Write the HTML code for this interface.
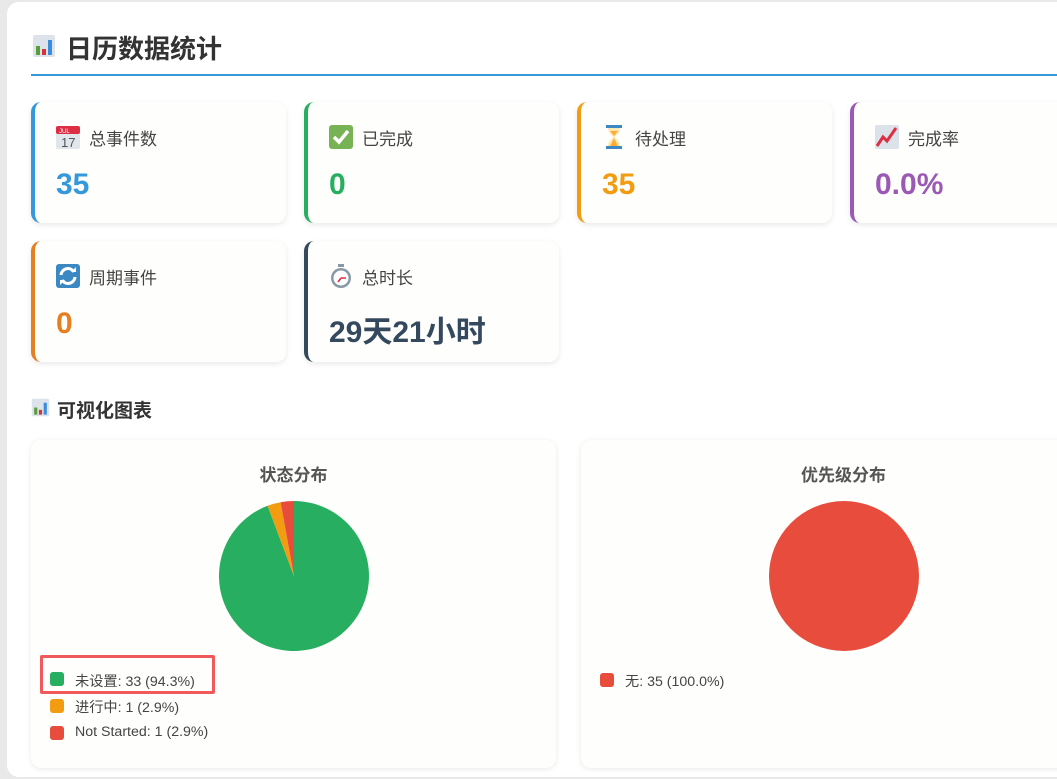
<!DOCTYPE html>
<html><head><meta charset="utf-8"><style>
*{margin:0;padding:0;box-sizing:border-box}
body{width:1057px;height:779px;overflow:hidden;background:#e9e9e9;font-family:"Liberation Sans","Noto Sans CJK SC",sans-serif;position:relative}
.modal{position:absolute;left:7px;top:2px;width:1070px;height:775px;background:#fff;border-radius:12px}
.abs{position:absolute}
h1{position:absolute;left:66px;top:29px;font-size:26px;font-weight:bold;color:#333}
.line{position:absolute;left:31px;top:74px;width:1030px;height:2px;background:#3498db}
.card{position:absolute;width:255px;height:121px;background:#fefefc;border-radius:10px;box-shadow:0 2px 6px rgba(0,0,0,.09);border-left:4px solid}
.card .lab{position:absolute;left:54px;top:23px;font-size:17px;color:#444}
.card .ic{position:absolute;left:20px;top:22px;width:26px;height:26px}
.card .val{position:absolute;left:21px;top:66px;font-size:30px;font-weight:bold}
.chart{position:absolute;top:440px;height:328px;background:#fefefc;border-radius:10px;box-shadow:0 1px 6px rgba(0,0,0,.09)}
.ct{position:absolute;top:21px;width:100%;text-align:center;font-size:17px;font-weight:bold;color:#555}
.leg{position:absolute;font-size:14.2px;color:#444}
.sw{position:absolute;width:14px;height:14px;border-radius:3px}
</style></head><body>
<div class="modal"></div>
<svg class="abs" style="left:32px;top:34px" width="24" height="24" viewBox="0 0 24 24"><rect x="1" y="1" width="22" height="22" rx="2" fill="#dde3ea"/><rect x="4" y="12" width="4" height="9" fill="#5a9e3c"/><rect x="10" y="15" width="4" height="6" fill="#d9313e"/><rect x="16" y="6" width="4" height="15" fill="#3a8dde"/></svg>
<h1>日历数据统计</h1>
<div class="line"></div>

<div class="card" style="left:31px;top:102px;border-color:#3498db">
<svg class="ic" viewBox="0 0 26 26"><rect x="1" y="2" width="24" height="23" rx="2" fill="#e1e6ec"/><rect x="1" y="2" width="24" height="8" rx="2" fill="#dd2e44"/><text x="4" y="9" font-size="6" fill="#fff" font-family="Liberation Sans">JUL</text><text x="6" y="23" font-size="13" fill="#555" font-family="Liberation Sans">17</text></svg>
<div class="lab">总事件数</div><div class="val" style="color:#3498db">35</div></div>

<div class="card" style="left:304px;top:102px;border-color:#27ae60">
<svg class="ic" viewBox="0 0 26 26"><rect x="1" y="1" width="24" height="24" rx="3" fill="#77b255"/><path d="M6 13l5 5 9-11" stroke="#fff" stroke-width="3.5" fill="none"/></svg>
<div class="lab">已完成</div><div class="val" style="color:#27ae60">0</div></div>

<div class="card" style="left:577px;top:102px;border-color:#f39c12">
<svg class="ic" viewBox="0 0 26 26"><rect x="5" y="1" width="16" height="3" fill="#3b88c3"/><rect x="5" y="22" width="16" height="3" fill="#3b88c3"/><path d="M7 4h12c0 6-5 7-5 9s5 3 5 9H7c0-6 5-7 5-9S7 10 7 4z" fill="#ffe8b6"/><path d="M9 7h8l-4 5zM13 14l4 8H9z" fill="#ffac33"/></svg>
<div class="lab">待处理</div><div class="val" style="color:#f39c12">35</div></div>

<div class="card" style="left:850px;top:102px;border-color:#9b59b6">
<svg class="ic" viewBox="0 0 26 26"><rect x="1" y="1" width="24" height="24" rx="2" fill="#dbe2ea"/><path d="M3 22l6-9 4 4 9-13" stroke="#dd2e44" stroke-width="3" fill="none"/></svg>
<div class="lab">完成率</div><div class="val" style="color:#9b59b6">0.0%</div></div>

<div class="card" style="left:31px;top:241px;border-color:#e67e22">
<svg class="ic" viewBox="0 0 26 26"><rect x="1" y="1" width="24" height="24" rx="3" fill="#3b88c3"/><path d="M6 12a7 7 0 0 1 13-3M20 14a7 7 0 0 1-13 3" stroke="#fff" stroke-width="3" fill="none"/><path d="M16 9h5V4zM10 17H5v5z" fill="#fff"/></svg>
<div class="lab">周期事件</div><div class="val" style="color:#e67e22">0</div></div>

<div class="card" style="left:304px;top:241px;border-color:#34495e">
<svg class="ic" viewBox="0 0 26 26"><rect x="10" y="1" width="6" height="3" fill="#8899a6"/><circle cx="13" cy="15" r="10" fill="#8899a6"/><circle cx="13" cy="15" r="7.5" fill="#fff"/><path d="M13 15h5M13 15l-3 4" stroke="#dd2e44" stroke-width="1.6"/></svg>
<div class="lab">总时长</div><div class="val" style="color:#34495e">29天21小时</div></div>

<svg class="abs" style="left:31px;top:398px" width="19" height="19" viewBox="0 0 24 24"><rect x="1" y="1" width="22" height="22" rx="2" fill="#dde3ea"/><rect x="4" y="12" width="4" height="9" fill="#5a9e3c"/><rect x="10" y="15" width="4" height="6" fill="#d9313e"/><rect x="16" y="6" width="4" height="15" fill="#3a8dde"/></svg>
<div class="abs" style="left:57px;top:396px;font-size:19px;font-weight:bold;color:#333">可视化图表</div>

<div class="chart" style="left:31px;width:525px">
<div class="ct">状态分布</div>
<svg class="abs" style="left:188px;top:61px" width="150" height="150" viewBox="0 0 150 150">
<path d="M75 75L75 0A75 75 0 1 1 48.6 4.8Z" fill="#27ae60"/>
<path d="M75 75L48.6 4.8A75 75 0 0 1 61.6 1.2Z" fill="#f39c12"/>
<path d="M75 75L61.6 1.2A75 75 0 0 1 75 0Z" fill="#e74c3c"/></svg>
<div class="abs" style="left:9px;top:215px;width:175px;height:39px;border:3px solid #f05a5a;border-radius:2px"></div>
<div class="sw" style="left:19px;top:232px;background:#27ae60"></div><div class="leg" style="left:44px;top:231px">未设置: 33 (94.3%)</div>
<div class="sw" style="left:19px;top:259px;background:#f39c12"></div><div class="leg" style="left:44px;top:257px">进行中: 1 (2.9%)</div>
<div class="sw" style="left:19px;top:286px;background:#e74c3c"></div><div class="leg" style="left:44px;top:284px">Not Started: 1 (2.9%)</div>
</div>

<div class="chart" style="left:581px;width:525px">
<div class="ct" style="width:525px;left:0">优先级分布</div>
<svg class="abs" style="left:188px;top:61px" width="150" height="150"><circle cx="75" cy="75" r="75" fill="#e74c3c"/></svg>
<div class="sw" style="left:19px;top:233px;background:#e74c3c"></div><div class="leg" style="left:44px;top:231px">无: 35 (100.0%)</div>
</div>
</body></html>
